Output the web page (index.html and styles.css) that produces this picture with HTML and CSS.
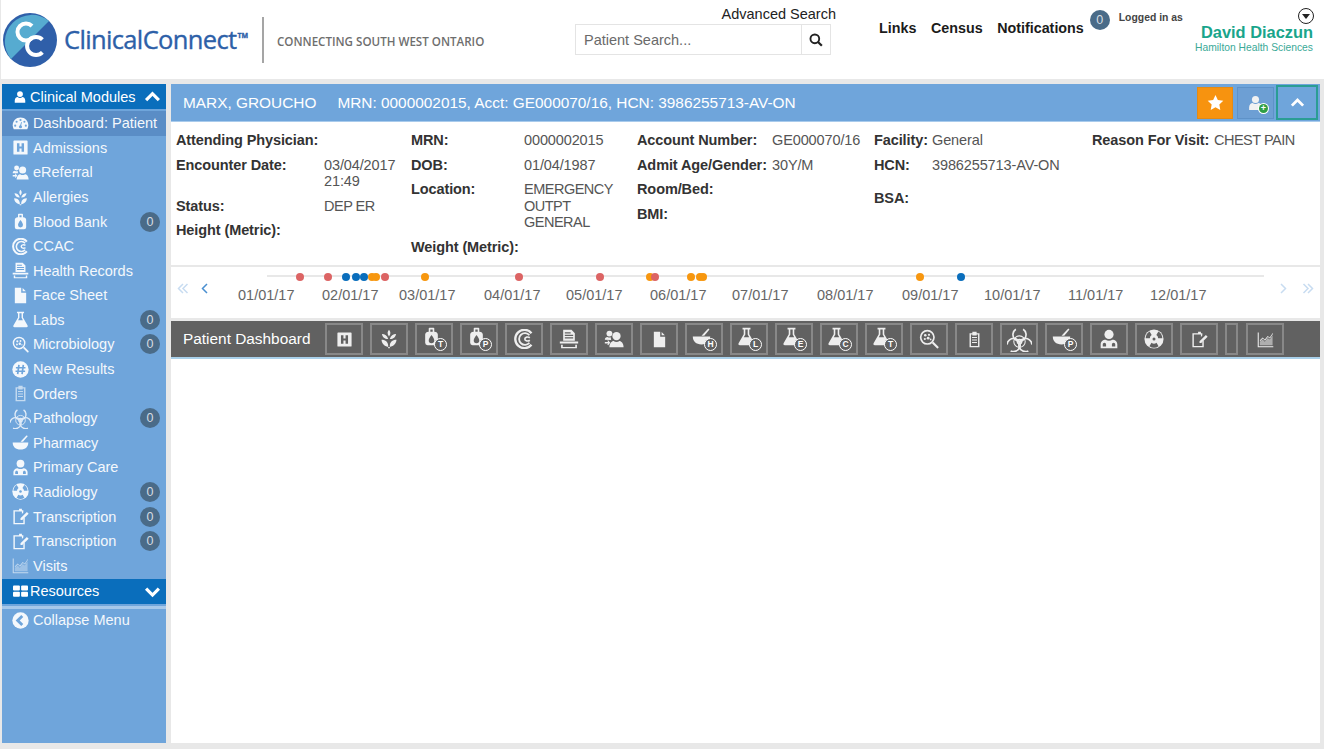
FILE: index.html
```html
<!DOCTYPE html>
<html lang="en">
<head>
  <meta charset="UTF-8" />
  <meta name="viewport" content="width=device-width, initial-scale=1.0" />
  <title>ClinicalConnect - Patient Dashboard</title>
  <link rel="stylesheet" href="styles.css">
</head>
<body>

  <!-- icon set -->
  <svg class="sprite" xmlns="http://www.w3.org/2000/svg">
    <symbol id="i-user" viewBox="0 0 24 24"><circle cx="12" cy="7" r="5"/><path d="M3 22v-4c0-4 3-6 5-6 1 1 2.500 1.500 4 1.500s3-.5 4-1.500c2 0 5 2 5 6v4z"/></symbol>
    <symbol id="i-gauge" viewBox="0 0 24 24"><path d="M12 3.500C5.500 3.500 1 8.500 1 14.500c0 2 .5 4 1.500 5.500h19c1-1.500 1.500-3.500 1.500-5.500 0-6-4.500-11-11-11z"/><g class="hole"><circle cx="12" cy="7" r="1.500"/><circle cx="6.500" cy="9.500" r="1.500"/><circle cx="17.500" cy="9.500" r="1.500"/><circle cx="4.500" cy="15" r="1.500"/><circle cx="19.500" cy="15" r="1.500"/><circle cx="12" cy="16.500" r="2.200"/><path d="M11 16l2-6 1 .4-1.400 6z"/></g></symbol>
    <symbol id="i-h" viewBox="0 0 24 24"><path fill-rule="evenodd" d="M3 2h18a1 1 0 0 1 1 1v18a1 1 0 0 1-1 1H3a1 1 0 0 1-1-1V3a1 1 0 0 1 1-1zM7 6v12h3.500v-4.500h3V18H17V6h-3.500v4.500h-3V6z"/></symbol>
    <symbol id="i-people" viewBox="0 0 24 24"><circle cx="15" cy="8.500" r="5"/><path d="M6.500 22c0-5 3-7.500 5-7.500 1 .8 2.200 1.200 3.500 1.200s2.500-.4 3.500-1.200c2 0 5 2.500 5 7.500z"/><circle cx="6.500" cy="5.500" r="3.500"/><path d="M1 13c0-2.500 1.500-3.500 3-3.500.8.500 1.600.7 2.500.7h2c-.5 1-.4 2 .2 3z"/><path d="M1 15.500h4l-1-1.500 1-.5 2.500 3-2.500 3-1-.5 1-1.500H1z"/></symbol>
    <symbol id="i-sprout" viewBox="0 0 24 24"><path d="M12 1c2 2 2.500 5 0 8-2.500-3-2-6 0-8z"/><path d="M3.500 6c3.500 0 6.500 2 7.500 6-3.500.3-7-2-7.500-6zM20.500 6c-3.500 0-6.500 2-7.500 6 3.500.3 7-2 7.500-6z"/><path d="M3 13c4 0 7.500 2 8 6.500V23h2v-3.500c.5-4.500 4-6.500 8-6.500-.3 5-4 8.500-9 8.500S3.300 18 3 13z"/></symbol>
    <symbol id="i-bag" viewBox="0 0 24 24"><path fill-rule="evenodd" d="M9.500 1h5a1 1 0 0 1 1 1v4h.5c2 0 4 1.500 4 3.500V20a3 3 0 0 1-3 3H7a3 3 0 0 1-3-3V9.500C4 7.500 6 6 8 6h.5V2a1 1 0 0 1 1-1zM10.500 3v3h3V3zM12 10c-2.500 3.500-3.500 5-3.500 7a3.500 3.500 0 0 0 7 0c0-2-1-3.500-3.500-7z"/></symbol>
    <symbol id="i-ccac" viewBox="0 0 24 24"><g class="line"><path d="M21 5A11 11 0 1 0 21 19" stroke-width="2.800"/><path d="M18.500 7.500A7 7 0 1 0 18.500 16.500" stroke-width="2.200"/><path d="M19 10.500c-2-1.500-6-1.200-6 1.500s4 3 6 1.500" stroke-width="2"/></g></symbol>
    <symbol id="i-records" viewBox="0 0 24 24"><path fill-rule="evenodd" d="M5 1h10l4 4v9H5zM7 4v1.300h7V4zM7 7v1.300h10V7zM7 10v1.300h10V10z"/><path d="M1 15h22v2.500H1zM2.500 19h2v2.500h15V19h2v4h-19z"/></symbol>
    <symbol id="i-file" viewBox="0 0 24 24"><path d="M4 1h9v7h7v15H4zM15 1.500 19.500 6H15z"/></symbol>
    <symbol id="i-flask" viewBox="0 0 24 24"><path fill-rule="evenodd" d="M7 1h10v2h-1.500v6L22 20.500c.7 1.300-.2 2.500-1.500 2.500h-17C2.200 23 1.300 21.800 2 20.500L8.500 9V3H7zM10.500 3v6.500L8.600 13h6.800l-1.900-3.500V3z"/></symbol>
    <symbol id="i-micro" viewBox="0 0 24 24"><path fill-rule="evenodd" d="M10 1a9 9 0 1 1 0 18 9 9 0 0 1 0-18zm0 2a7 7 0 1 0 0 14 7 7 0 0 0 0-14z"/><circle cx="7.500" cy="7.500" r="1.500"/><circle cx="12" cy="7" r="1.300"/><circle cx="7" cy="12" r="1.300"/><circle cx="11" cy="11" r="1.700"/><circle cx="14" cy="12.500" r="1"/><path d="M15.500 17l1.800-1.800 6 6a1.300 1.300 0 0 1-1.800 1.800z"/></symbol>
    <symbol id="i-hash" viewBox="0 0 24 24"><circle cx="12" cy="12" r="11.500"/><g class="cut"><path d="M9.800 5.500 8 18.500M16 5.500 14.200 18.500M5.500 9.500h13.500M5 14.500h13.500"/></g></symbol>
    <symbol id="i-clip" viewBox="0 0 24 24"><path fill-rule="evenodd" d="M9 1h6v2h4v20H5V3h4zM7 5v16h10V5h-2v1.500H9V5z"/><path d="M8.500 8.500h7V10h-7zM8.500 12h7v1.500h-7zM8.500 15.500h7V17h-7z"/></symbol>
    <symbol id="i-bio" viewBox="0 0 24 24"><g class="line" stroke-width="1.600"><circle cx="12" cy="14" r="2"/><circle cx="12" cy="14" r="5.500" stroke-width="1"/><path d="M8.500 2.200A6.300 6.300 0 1 0 15.500 2.200"/><path d="M8.500 2.200A6.300 6.300 0 1 0 15.500 2.200" transform="rotate(120 12 14)"/><path d="M8.500 2.200A6.300 6.300 0 1 0 15.500 2.200" transform="rotate(240 12 14)"/></g></symbol>
    <symbol id="i-mortar" viewBox="0 0 24 24"><path d="M1 12h22c0 6-4 10-11 10S1 18 1 12z"/><path d="M12 11 20 2.500c.8-.8 2-.2 1.800 1L15.500 11z"/></symbol>
    <symbol id="i-doc" viewBox="0 0 24 24"><circle cx="12" cy="6.500" r="5.500"/><path fill-rule="evenodd" d="M2 23v-4.500c0-3 2.500-5.500 6-5.500 1 .8 2.500 1.200 4 1.200s3-.4 4-1.200c3.500 0 6 2.500 6 5.500V23zM4.500 21h4v-2.500c0-1-1-2-2-2s-2 1-2 2zM15.500 21h4v-2.500c0-1-1-2-2-2s-2 1-2 2z"/></symbol>
    <symbol id="i-rad" viewBox="0 0 24 24"><circle cx="12" cy="12" r="11.500"/><g class="hole"><circle cx="12" cy="12" r="1.800"/><path d="M9.200 7.200 6.700 2.900A10 10 0 0 0 2 11h5a5 5 0 0 1 2.200-3.800zM14.800 7.200l2.500-4.300A10 10 0 0 1 22 11h-5a5 5 0 0 0-2.200-3.800zM9 16.500 6.500 20.800a10 10 0 0 0 11 0L15 16.500a5 5 0 0 1-6 0z"/></g></symbol>
    <symbol id="i-note" viewBox="0 0 24 24"><path fill-rule="evenodd" d="M7 3h3V1h4v2h2v3.500l-2 2V5H4v16h12v-6l2-2v10H2V3z"/><path d="M21 5.500l2.500 2.500-9 9H12v-2.500z"/></symbol>
    <symbol id="i-chart" viewBox="0 0 24 24"><path d="M1 2h1.500v19.500H23V23H1z"/><path class="soft" d="M4 20v-5l4-3 3 3 4-5 3 2 4-6v14z"/><path d="M4 13l4-4 3 3 4-5 3 2 4-6 .8.600-4.500 7-3-2-4 5-3-3-4 3.700z"/></symbol>
    <symbol id="i-grid" viewBox="0 0 24 18"><rect x="0" y="0" width="11" height="8" rx="1.500"/><rect x="13" y="0" width="11" height="8" rx="1.500"/><rect x="0" y="10" width="11" height="8" rx="1.500"/><rect x="13" y="10" width="11" height="8" rx="1.500"/></symbol>
    <symbol id="i-back" viewBox="0 0 24 24"><circle cx="12" cy="12" r="11.500"/><path class="cut wide" d="M14.500 5.500 8 12l6.500 6.500"/></symbol>
    <symbol id="i-up" viewBox="0 0 24 24"><path class="line heavy" d="M3 17 12 8l9 9"/></symbol>
    <symbol id="i-down" viewBox="0 0 24 24"><path class="line heavy" d="M3 8l9 9 9-9"/></symbol>
    <symbol id="i-left" viewBox="0 0 24 24"><path class="line" stroke-width="3" d="M16 3 7 12l9 9"/></symbol>
    <symbol id="i-right" viewBox="0 0 24 24"><path class="line" stroke-width="3" d="M8 3l9 9-9 9"/></symbol>
    <symbol id="i-left2" viewBox="0 0 24 24"><path class="line" stroke-width="3" d="M12 3 3 12l9 9M21 3l-9 9 9 9"/></symbol>
    <symbol id="i-right2" viewBox="0 0 24 24"><path class="line" stroke-width="3" d="M3 3l9 9-9 9M12 3l9 9-9 9"/></symbol>
    <symbol id="i-star" viewBox="0 0 24 24"><path d="M12 1.500l3.300 7 7.700 1-5.600 5.300 1.400 7.700-6.800-3.800-6.800 3.800 1.400-7.700L1 9.500l7.700-1z"/></symbol>
    <symbol id="i-search" viewBox="0 0 24 24"><circle class="line" stroke-width="3.200" cx="10" cy="10" r="7.500"/><path class="line" stroke-width="3.800" d="M15.500 15.500 22 22"/></symbol>
  </svg>

  <header class="topbar">
    <div class="brand">
      <svg class="logo" viewBox="0 0 54 54">
        <circle cx="27" cy="27" r="27" fill="#2f5fa9"/>
        <path d="M8 46A27 27 0 0 1 46 8z" fill="#56abd0"/>
        <path d="M29 13A8.500 8.500 0 1 0 29 25" fill="none" stroke="#fff" stroke-width="4"/>
        <path d="M39.400 26.600A9 9 0 1 0 39.400 39.400" fill="none" stroke="#fff" stroke-width="4"/>
      </svg>
      <span class="brand-name">ClinicalConnect<sup>TM</sup></span>
      <span class="brand-sep"></span>
      <span class="brand-tag">CONNECTING SOUTH WEST ONTARIO</span>
    </div>

    <div class="search">
      <a class="adv-link">Advanced Search</a>
      <div class="search-box">
        <input type="text" placeholder="Patient Search...">
        <button><svg class="ic-search"><use href="#i-search"/></svg></button>
      </div>
    </div>

    <nav class="top-nav">
      <a>Links</a>
      <a>Census</a>
      <a>Notifications</a>
    </nav>
    <span class="badge top-badge">0</span>
    <span class="logged-in">Logged in as</span>

    <div class="user">
      <span class="user-menu"></span>
      <span class="user-name">David Diaczun</span>
      <span class="user-org">Hamilton Health Sciences</span>
    </div>
  </header>

  <div class="layout">
    <aside class="sidebar">
      <div class="side-head"><svg class="ic"><use href="#i-user"/></svg><span>Clinical Modules</span><svg class="chev"><use href="#i-up"/></svg></div>
      <ul class="side-list">
        <li class="active"><svg class="ic"><use href="#i-gauge"/></svg>Dashboard: Patient</li>
        <li><svg class="ic"><use href="#i-h"/></svg>Admissions</li>
        <li><svg class="ic"><use href="#i-people"/></svg>eReferral</li>
        <li><svg class="ic"><use href="#i-sprout"/></svg>Allergies</li>
        <li><svg class="ic"><use href="#i-bag"/></svg>Blood Bank<span class="badge">0</span></li>
        <li><svg class="ic"><use href="#i-ccac"/></svg>CCAC</li>
        <li><svg class="ic"><use href="#i-records"/></svg>Health Records</li>
        <li><svg class="ic"><use href="#i-file"/></svg>Face Sheet</li>
        <li><svg class="ic"><use href="#i-flask"/></svg>Labs<span class="badge">0</span></li>
        <li><svg class="ic"><use href="#i-micro"/></svg>Microbiology<span class="badge">0</span></li>
        <li><svg class="ic"><use href="#i-hash"/></svg>New Results</li>
        <li><svg class="ic faint"><use href="#i-clip"/></svg>Orders</li>
        <li><svg class="ic big"><use href="#i-bio"/></svg>Pathology<span class="badge">0</span></li>
        <li><svg class="ic"><use href="#i-mortar"/></svg>Pharmacy</li>
        <li><svg class="ic"><use href="#i-doc"/></svg>Primary Care</li>
        <li><svg class="ic"><use href="#i-rad"/></svg>Radiology<span class="badge">0</span></li>
        <li><svg class="ic"><use href="#i-note"/></svg>Transcription<span class="badge">0</span></li>
        <li><svg class="ic"><use href="#i-note"/></svg>Transcription<span class="badge">0</span></li>
        <li><svg class="ic faint"><use href="#i-chart"/></svg>Visits</li>
      </ul>
      <div class="side-head resources"><svg class="ic wide"><use href="#i-grid"/></svg><span>Resources</span><svg class="chev"><use href="#i-down"/></svg></div>
      <div class="collapse"><svg class="ic"><use href="#i-back"/></svg>Collapse Menu</div>
    </aside>

    <main class="content">
      <section class="patient-bar">
        <span class="patient-name">MARX, GROUCHO</span>
        <span class="patient-ids">MRN: 0000002015, Acct: GE000070/16, HCN: 3986255713-AV-ON</span>
        <div class="patient-actions">
          <button class="act act-star"><svg><use href="#i-star"/></svg></button>
          <button class="act act-add">
            <svg class="add-user"><use href="#i-user"/></svg>
            <span class="add-dot">+</span>
          </button>
          <button class="act act-toggle"><svg><use href="#i-up"/></svg></button>
        </div>
      </section>

      <section class="info">
        <div class="info-col col-a">
          <div class="row"><b>Attending Physician:</b></div>
          <div class="row"><b>Encounter Date:</b><span>03/04/2017<br>21:49</span></div>
          <div class="row"><b>Status:</b><span class="caps">DEP ER</span></div>
          <div class="row"><b>Height (Metric):</b></div>
        </div>
        <div class="info-col col-b">
          <div class="row"><b>MRN:</b><span>0000002015</span></div>
          <div class="row"><b>DOB:</b><span>01/04/1987</span></div>
          <div class="row"><b>Location:</b><span class="caps">EMERGENCY<br>OUTPT<br>GENERAL</span></div>
          <div class="row"><b>Weight (Metric):</b></div>
        </div>
        <div class="info-col col-c">
          <div class="row"><b>Account Number:</b><span>GE000070/16</span></div>
          <div class="row"><b>Admit Age/Gender:</b><span>30Y/M</span></div>
          <div class="row"><b>Room/Bed:</b></div>
          <div class="row"><b>BMI:</b></div>
        </div>
        <div class="info-col col-d">
          <div class="row"><b>Facility:</b><span>General</span></div>
          <div class="row tall"><b>HCN:</b><span>3986255713-AV-ON</span></div>
          <div class="row"><b>BSA:</b></div>
        </div>
        <div class="info-col col-e">
          <div class="row"><b>Reason For Visit:</b><span class="caps">CHEST PAIN</span></div>
        </div>
      </section>

      <section class="timeline">
        <div class="tl-nav">
          <svg class="tl-arrow pale"><use href="#i-left2"/></svg>
          <svg class="tl-arrow"><use href="#i-left"/></svg>
        </div>
        <div class="tl-axis">
          <div class="tl-line"></div>
          <i class="dot red" style="left:84px"></i>
          <i class="dot red" style="left:112px"></i>
          <i class="dot blue" style="left:130px"></i>
          <i class="dot blue" style="left:140px"></i>
          <i class="dot blue" style="left:148px"></i>
          <i class="dot orange" style="left:156px"></i>
          <i class="dot orange" style="left:160px"></i>
          <i class="dot red" style="left:169px"></i>
          <i class="dot orange" style="left:209px"></i>
          <i class="dot red" style="left:303px"></i>
          <i class="dot red" style="left:384px"></i>
          <i class="dot orange" style="left:434px"></i>
          <i class="dot red" style="left:439px"></i>
          <i class="dot orange" style="left:475px"></i>
          <i class="dot orange" style="left:484px"></i>
          <i class="dot orange" style="left:487px"></i>
          <i class="dot orange" style="left:704px"></i>
          <i class="dot blue" style="left:745px"></i>
          <span class="tl-date" style="left:22px">01/01/17</span>
          <span class="tl-date" style="left:106px">02/01/17</span>
          <span class="tl-date" style="left:183px">03/01/17</span>
          <span class="tl-date" style="left:268px">04/01/17</span>
          <span class="tl-date" style="left:350px">05/01/17</span>
          <span class="tl-date" style="left:434px">06/01/17</span>
          <span class="tl-date" style="left:516px">07/01/17</span>
          <span class="tl-date" style="left:601px">08/01/17</span>
          <span class="tl-date" style="left:686px">09/01/17</span>
          <span class="tl-date" style="left:768px">10/01/17</span>
          <span class="tl-date" style="left:852px">11/01/17</span>
          <span class="tl-date" style="left:934px">12/01/17</span>
        </div>
        <div class="tl-nav right">
          <svg class="tl-arrow pale"><use href="#i-right"/></svg>
          <svg class="tl-arrow pale"><use href="#i-right2"/></svg>
        </div>
      </section>

      <section class="toolbar">
        <span class="toolbar-title">Patient Dashboard</span>
        <div class="tools">
          <button><svg><use href="#i-h"/></svg></button>
          <button class="lg"><svg><use href="#i-sprout"/></svg></button>
          <button class="tag"><svg><use href="#i-bag"/></svg><span>T</span></button>
          <button class="tag"><svg><use href="#i-bag"/></svg><span>P</span></button>
          <button class="lg"><svg><use href="#i-ccac"/></svg></button>
          <button class="lg"><svg><use href="#i-records"/></svg></button>
          <button class="lg"><svg><use href="#i-people"/></svg></button>
          <button><svg><use href="#i-file"/></svg></button>
          <button class="tag"><svg><use href="#i-mortar"/></svg><span>H</span></button>
          <button class="tag"><svg><use href="#i-flask"/></svg><span>L</span></button>
          <button class="tag"><svg><use href="#i-flask"/></svg><span>E</span></button>
          <button class="tag"><svg><use href="#i-flask"/></svg><span>C</span></button>
          <button class="tag"><svg><use href="#i-flask"/></svg><span>T</span></button>
          <button class="lg"><svg><use href="#i-micro"/></svg></button>
          <button><svg><use href="#i-clip"/></svg></button>
          <button class="xl"><svg><use href="#i-bio"/></svg></button>
          <button class="tag"><svg><use href="#i-mortar"/></svg><span>P</span></button>
          <button class="lg"><svg><use href="#i-doc"/></svg></button>
          <button class="lg"><svg><use href="#i-rad"/></svg></button>
          <button><svg><use href="#i-note"/></svg></button>
          <button class="narrow"></button>
          <button><svg><use href="#i-chart"/></svg></button>
        </div>
      </section>

      <section class="dash-body"></section>
    </main>
  </div>

</body>
</html>
```

FILE: styles.css
```css
* {
  box-sizing: border-box;
}
html, body {
  height: 100%;
}
body {
  margin: 0;
  overflow: hidden;
  background: #e8e8e8;
  color: #333;
  font-family: "Liberation Sans", Arial, sans-serif;
  font-size: 14.5px;
}
.sprite {
  display: none;
}
symbol {
  fill: currentColor;
}
.line {
  fill: none;
  stroke: currentColor;
}
.heavy {
  stroke-width: 4.5;
}
.hole {
  fill: var(--hole, #6fa5db);
}
.cut {
  fill: none;
  stroke: var(--hole, #6fa5db);
  stroke-width: 2.4;
}
.wide {
  stroke-width: 4;
}
.soft {
  opacity: 0.55;
}

/* top bar */
.topbar {
  display: flex;
  height: 79px;
  margin-left: 1px;
  background: #fff;
}
.brand {
  display: flex;
  align-items: center;
  width: 574px;
  padding-left: 2px;
}
.logo {
  width: 54px;
  height: 54px;
  flex: none;
}
.brand-name {
  width: 198px;
  margin-left: 7px;
  margin-top: -1px;
  color: #2d60a8;
  font-family: "Open Sans", sans-serif;
  font-size: 25.5px;
  letter-spacing: -0.65px;
  -webkit-text-stroke: 0.35px #2d60a8;
  white-space: nowrap;
}
.brand-name sup {
  margin-left: 1px;
  font-size: 7px;
  font-weight: bold;
  letter-spacing: 0;
  vertical-align: 11px;
  line-height: 0;
}
.brand-sep {
  width: 2px;
  height: 46px;
  margin-top: 1px;
  background: #a5a5a5;
}
.brand-tag {
  margin-left: 13px;
  margin-top: 4px;
  color: #6e6e6e;
  font-family: "Open Sans", sans-serif;
  font-size: 11.6px;
  font-weight: 600;
  white-space: nowrap;
}
.search {
  width: 261px;
  padding-top: 6px;
}
.adv-link {
  display: block;
  color: #222;
  line-height: 17px;
  text-align: right;
}
.search-box {
  display: flex;
  width: 256px;
  height: 31px;
  margin-top: 1px;
  border: 1px solid #e4e4e4;
}
.search-box input {
  flex: 1;
  min-width: 0;
  padding: 0 8px;
  border: 0;
  outline: 0;
  color: #555;
  font: inherit;
}
.search-box input::placeholder {
  color: #6a6a6a;
}
.search-box button {
  width: 29px;
  padding: 0;
  border: 0;
  border-left: 1px solid #e4e4e4;
  background: #fff;
  color: #222;
}
.ic-search {
  display: block;
  width: 14px;
  height: 14px;
  margin: 1px auto 0;
}
.top-nav {
  display: flex;
  gap: 14.6px;
  margin-left: 43px;
  padding-top: 19px;
  color: #1b1b1b;
  font-size: 14.3px;
  font-weight: bold;
  line-height: 18px;
}
.badge {
  display: flex;
  align-items: center;
  justify-content: center;
  width: 20px;
  height: 20px;
  border-radius: 50%;
  background: #4a6b88;
  color: #d6dde3;
  font-size: 12.5px;
}
.top-badge {
  margin-left: 6px;
  margin-top: 10px;
}
.logged-in {
  margin-left: 9px;
  padding-top: 12px;
  color: #444;
  font-size: 10.4px;
  font-weight: bold;
  white-space: nowrap;
}
.user {
  display: flex;
  flex-direction: column;
  align-items: flex-end;
  margin-left: auto;
  padding: 8px 11px 0 0;
}
.user-menu {
  position: relative;
  width: 16px;
  height: 16px;
  margin-right: -1px;
  border: 1.5px solid #222;
  border-radius: 50%;
}
.user-menu::after {
  content: "";
  position: absolute;
  left: 3px;
  top: 5px;
  border: 4px solid transparent;
  border-top: 5px solid #222;
  border-bottom: 0;
}
.user-name {
  color: #19a58b;
  font-size: 16.4px;
  font-weight: bold;
  line-height: 17px;
}
.user-org {
  color: #3aa997;
  font-size: 10.3px;
  line-height: 14px;
  white-space: nowrap;
}

/* page body */
.layout {
  display: flex;
  gap: 5px;
  height: 659px;
  margin: 5px 4px 0 2px;
}

/* left menu */
.sidebar {
  flex: none;
  width: 164px;
  background: #6fa5db;
  color: #f4f8fc;
}
.side-head {
  display: flex;
  align-items: center;
  height: 25px;
  padding: 0 5px 0 11px;
  background: #0a6ebc;
  color: #fff;
}
.side-head span {
  flex: 1;
  margin-left: 3px;
}
.side-head .ic {
  margin-right: 0;
  width: 14px;
  height: 14px;
}
.side-head .ic.wide {
  width: 15px;
  height: 12px;
}
.side-head .ic.wide + span {
  margin-left: 2px;
}
.chev {
  width: 17px;
  height: 17px;
}
.side-list {
  margin: 2px 0 0;
  padding: 0;
  list-style: none;
}
.side-list li, .collapse {
  display: flex;
  align-items: center;
  height: 24.58px;
  padding: 0 6px 0 10px;
  white-space: nowrap;
}
.side-list li.active {
  background: #5a8dc6;
}
.side-list .badge {
  margin-left: auto;
}
.ic {
  flex: none;
  width: 17px;
  height: 17px;
  margin-right: 4px;
}
.ic.faint {
  opacity: 0.65;
}
.ic.big {
  width: 21px;
  height: 21px;
  margin: 0 2px 0 -2px;
  opacity: 0.85;
}
.resources {
  margin-top: 1px;
}
.collapse {
  margin-top: 2px;
  border-top: 3px solid #a6c8ea;
  height: 26px;
}

/* patient panel */
.content {
  display: flex;
  flex: 1;
  flex-direction: column;
  min-width: 0;
  background: #fff;
}
.patient-bar {
  display: flex;
  align-items: center;
  height: 38px;
  padding: 0 2px 0 12px;
  background: #6fa5db;
  border-bottom: 1px solid #a9cbec;
  color: #fff;
  font-size: 15.4px;
}
.patient-name {
  margin-right: 21px;
}
.patient-actions {
  display: flex;
  gap: 4px;
  margin-left: auto;
}
.act {
  display: flex;
  align-items: center;
  justify-content: center;
  position: relative;
  width: 37px;
  height: 32px;
  padding: 0;
  border: 1px solid #5e92c8;
  background: #6fa5db;
  color: #fff;
}
.act svg {
  width: 17px;
  height: 17px;
}
.act-star {
  width: 36px;
  background: #f7930f;
  border-color: #e58a12;
}
.act-add {
  background: #6d9fd4;
}
.act-add .add-user {
  width: 17px;
  height: 22px;
  color: #f2f2f2;
}
.add-dot {
  position: absolute;
  left: 21px;
  top: 16px;
  width: 9px;
  height: 9px;
  border-radius: 50%;
  background: #2f9e44;
  box-shadow: 0 0 0 1px #fff;
  color: #fff;
  font-size: 9px;
  font-weight: bold;
  line-height: 9px;
  text-align: center;
}
.act-toggle {
  width: 42px;
  height: 35px;
  margin: -2px 0 -2px -2px;
  border: 2px solid #2a9d94;
}
.act-toggle svg {
  width: 15px;
  height: 15px;
}
.info {
  display: flex;
  height: 143px;
  padding: 6px 0 0 5px;
  color: #555;
  line-height: 16.5px;
  font-size: 14.5px;
}
.info b {
  flex: none;
  color: #333;
  letter-spacing: -0.1px;
  white-space: nowrap;
}
.info span {
  letter-spacing: -0.12px;
}
.info .caps {
  letter-spacing: -0.5px;
}
.info-col {
  flex: none;
}
.row {
  display: flex;
  padding: 4px 0;
}
.col-a { width: 235px; }
.col-a b { width: 148px; }
.col-b { width: 226px; }
.col-b b { width: 113px; }
.col-c { width: 237px; }
.col-c b { width: 135px; }
.col-d { width: 218px; }
.col-d b { width: 58px; }
.col-e b { width: 122px; }
.row.tall {
  min-height: 33px;
}

/* timeline */
.timeline {
  display: flex;
  height: 53px;
  border-top: 2px solid #e8e8e8;
}
.tl-nav {
  display: flex;
  gap: 10px;
  width: 45px;
  padding: 15px 0 0 6px;
}
.tl-nav.right {
  width: 50px;
  gap: 13px;
  padding-left: 7px;
}
.tl-arrow {
  width: 12px;
  height: 13px;
  color: #4a8fd0;
}
.tl-arrow.pale {
  color: #c8dcf1;
}
.tl-axis {
  position: relative;
  flex: 1;
}
.tl-line {
  position: absolute;
  left: 51px;
  right: 6px;
  top: 8px;
  height: 2px;
  background: #e8e8e8;
}
.dot {
  position: absolute;
  top: 5.5px;
  width: 8px;
  height: 8px;
  margin-left: -4px;
  border-radius: 50%;
}
.dot.red { background: #dc6464; }
.dot.blue { background: #0a6ebc; }
.dot.orange { background: #f7970f; }
.tl-date {
  position: absolute;
  top: 20px;
  color: #666;
  line-height: 16px;
}

/* dashboard toolbar */
.toolbar {
  --hole: #616161;
  display: flex;
  align-items: center;
  height: 41px;
  border-top: 3px solid #e8e8e8;
  background: #616161;
  border-bottom: 2px solid #a9d0ea;
  color: #fff;
}
.toolbar-title {
  width: 154px;
  padding-left: 12px;
  font-size: 15.4px;
  white-space: nowrap;
}
.tools {
  display: flex;
  gap: 7px;
}
.tools button {
  position: relative;
  display: flex;
  align-items: center;
  justify-content: center;
  width: 38px;
  height: 32px;
  padding: 0;
  border: 2px solid #888;
  background: #616161;
  color: #eee;
}
.tools svg {
  width: 17px;
  height: 17px;
}
.tools .lg svg {
  width: 20px;
  height: 20px;
}
.tools .xl svg {
  width: 25px;
  height: 25px;
}
.tools .narrow {
  width: 13px;
  margin-right: 1px;
}
.tools .tag svg {
  width: 19px;
  height: 19px;
  margin: -5px 6px 0 0;
}
.tag span {
  position: absolute;
  left: 17px;
  top: 13px;
  width: 13px;
  height: 13px;
  border: 1px solid #fff;
  border-radius: 50%;
  background: #616161;
  color: #fff;
  font-size: 8.5px;
  font-weight: bold;
  line-height: 11px;
  text-align: center;
}
.dash-body {
  flex: 1;
}
```
